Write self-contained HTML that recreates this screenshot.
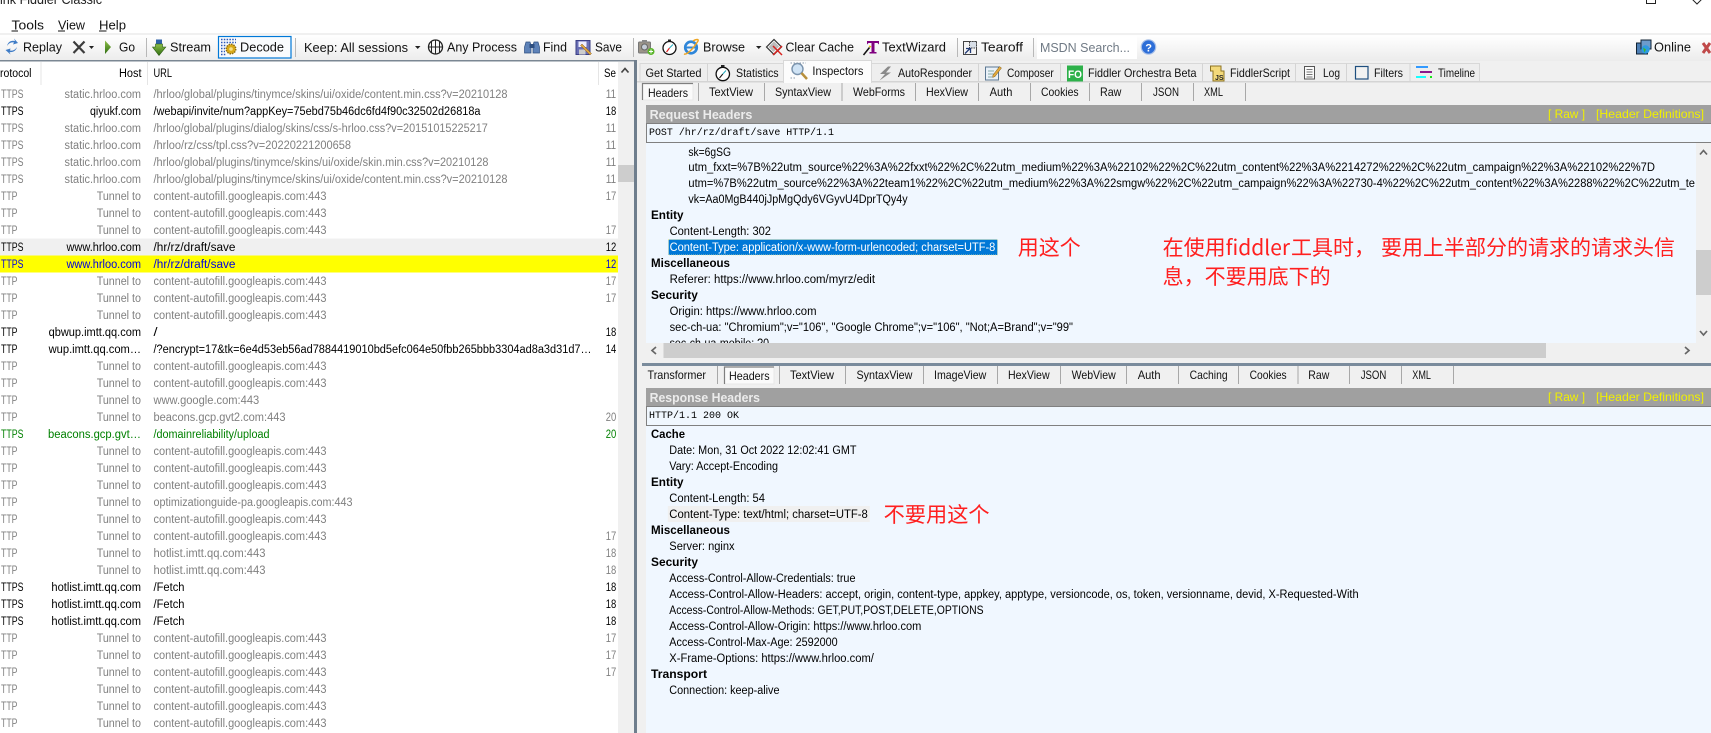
<!DOCTYPE html>
<html><head><meta charset="utf-8"><title>Fiddler Classic</title>
<style>
html,body{margin:0;padding:0;background:#fff;width:1711px;height:733px;overflow:hidden}
svg{display:block}
text{font-family:"Liberation Sans","Noto Sans CJK SC",sans-serif;font-size:11.5px;fill:#000;lengthAdjust:spacingAndGlyphs}
.g text,text.g{fill:#808080}
.k text{fill:#000}
.u{font-size:12.5px;fill:#111}
.tab{font-size:12px;fill:#111}
.h{font-weight:700;font-size:11.5px}
.bar{font-weight:700;font-size:13px;fill:#ececec}
.y{font-size:12px;fill:#f0f000}
.m{font-family:"Liberation Mono",monospace;font-size:10px}
.r{font-family:"Noto Sans CJK SC","Liberation Sans",sans-serif;font-size:21px;fill:#ff1f1f}
</style></head><body>
<svg xmlns="http://www.w3.org/2000/svg" width="1711" height="733" viewBox="0 0 1711 733">
<defs>
<linearGradient id="tb" x1="0" y1="0" x2="0" y2="1"><stop offset="0" stop-color="#fff"/><stop offset="1" stop-color="#ececec"/></linearGradient>
<linearGradient id="go" x1="0" y1="0" x2="0" y2="1"><stop offset="0" stop-color="#8fc04a"/><stop offset="1" stop-color="#2f6d12"/></linearGradient>
</defs>
<rect width="1711" height="733" fill="#fff"/>
<!-- title -->
<text x="0" y="4" textLength="102" lengthAdjust="spacingAndGlyphs" style="font-size:14px;fill:#222">ink Fiddler Classic</text>
<path d="M1646.5 -2V3.5H1655.5V-2" fill="none" stroke="#222"/>
<path d="M1692 -1L1697 4L1702 -1" fill="none" stroke="#222"/>
<!-- menu -->
<text class="u" x="11.5" y="29.5" textLength="32.5" lengthAdjust="spacingAndGlyphs">Tools</text>
<text class="u" x="58" y="29.5" textLength="27" lengthAdjust="spacingAndGlyphs">View</text>
<text class="u" x="99" y="29.5" textLength="27" lengthAdjust="spacingAndGlyphs">Help</text>
<path d="M11.5 31H18M58 31H65M99 31H106.500" stroke="#111"/>
<!-- toolbar -->
<rect x="0" y="33" width="1711" height="2" fill="#f0f0f0"/>
<rect x="0" y="35" width="1711" height="26" fill="url(#tb)"/>
<path d="M7 46C8 42 11 40 15 41L14 38.500L18 43L13 44.500L14 42.500C11 42 9 43 7 46Z" fill="#3f7cc6"/>
<path d="M17 47C16 51 13 52.500 9.500 52L10.500 54.500L5.500 50L10.500 48.500L10 50.500C13 51 15 50 17 47Z" fill="#3f7cc6"/>
<text class="u" x="23" y="51.500" textLength="39" lengthAdjust="spacingAndGlyphs">Replay</text>
<path d="M73.500 41.500L84.500 53M84.500 41.500L73.500 53" stroke="#3c3c3c" stroke-width="2.200" fill="none"/>
<path d="M89 46H94L91.500 49Z" fill="#222"/>
<path d="M105 40.500L111 47L105 54Z" fill="url(#go)"/>
<text class="u" x="119" y="51.500" textLength="16" lengthAdjust="spacingAndGlyphs">Go</text>
<rect x="146" y="38" width="1" height="19" fill="#b8b8b8"/>
<rect x="156" y="39.500" width="6" height="5" fill="#2f62a8"/>
<path d="M155.500 44H162.500V47H165.800L159 55.500L152.500 47H155.500Z" fill="url(#go)" stroke="#27590f" stroke-width=".6"/>
<text class="u" x="170" y="51.500" textLength="41" lengthAdjust="spacingAndGlyphs">Stream</text>
<rect x="218.500" y="36.500" width="72.500" height="21.500" fill="#f9fbfd" stroke="#0078d7" stroke-width="1.200"/>
<path d="M221 39.500H236M221 42.500H236M221 45.500H226M221 48.500H225M221 51.500H225M221 54.500H226" stroke="#2a58b8" stroke-width="1.500" stroke-dasharray="1.500 1.300" fill="none"/>
<circle cx="231" cy="49" r="4.800" fill="#d8a918" stroke="#8d6d10" stroke-width="1.400" stroke-dasharray="1.500 1"/>
<circle cx="231" cy="49" r="1.800" fill="#f5e08a"/>
<text class="u" x="240" y="51.500" textLength="44" lengthAdjust="spacingAndGlyphs">Decode</text>
<rect x="295" y="38" width="1" height="19" fill="#b8b8b8"/>
<text class="u" x="304" y="52" textLength="104" lengthAdjust="spacingAndGlyphs">Keep: All sessions</text>
<path d="M415 46H420.500L417.700 49Z" fill="#222"/>
<circle cx="435.500" cy="47" r="7" fill="none" stroke="#222" stroke-width="1.300"/>
<path d="M428 47H443M435.500 39.500V54.500M431.500 41.500V52.500M439.500 41.500V52.500" stroke="#222" stroke-width="1" fill="none"/>
<text class="u" x="447" y="51.500" textLength="70" lengthAdjust="spacingAndGlyphs">Any Process</text>
<path d="M526 42h4l1 3v8h-6.500v-6zM534 42h4l1.500 5v6H533v-8z" fill="#5d82b8" stroke="#2e4f80" stroke-width=".7"/>
<rect x="529.500" y="44" width="5" height="4" fill="#2e4f80"/>
<text class="u" x="543" y="51.500" textLength="24" lengthAdjust="spacingAndGlyphs">Find</text>
<rect x="576" y="40.500" width="14" height="14" fill="#6a6fb5" stroke="#3b3f85"/>
<rect x="578.500" y="41.500" width="8" height="5.500" fill="#eef"/>
<rect x="579" y="49.500" width="6.500" height="5" fill="#ccc"/>
<path d="M582 44L591.500 53.500L590 55L580.500 45.500Z" fill="#d9a441" stroke="#8a5a20" stroke-width=".5"/>
<text class="u" x="595" y="51.500" textLength="27" lengthAdjust="spacingAndGlyphs">Save</text>
<rect x="633" y="38" width="1" height="19" fill="#b8b8b8"/>
<rect x="638.500" y="42" width="12" height="11" rx="1" fill="#9b9488" stroke="#777"/>
<rect x="642" y="40" width="5" height="2.500" fill="#888"/>
<circle cx="644.500" cy="47" r="3" fill="#c5ccd6" stroke="#666"/>
<circle cx="651" cy="51.500" r="3.500" fill="#5ab52a"/>
<path d="M649 51.500H653M651 49.500V53.500" stroke="#fff"/>
<circle cx="669.500" cy="48" r="6.500" fill="#fff" stroke="#111" stroke-width="1.300"/>
<rect x="668" y="39.500" width="3" height="2" fill="#222"/>
<path d="M669.500 48L666.500 52" stroke="#d22" stroke-width="1.200"/>
<path d="M669.500 48L673 44.500" stroke="#2ab" stroke-width="1"/>
<circle cx="691" cy="47.500" r="5.800" fill="none" stroke="#2e86d9" stroke-width="2.600"/>
<path d="M686 47.500H696" stroke="#2e86d9" stroke-width="2"/>
<path d="M684 54C687 55 693 49 698 41C699 39 696 39 693 41" fill="none" stroke="#eda523" stroke-width="1.500"/>
<text class="u" x="703" y="51.500" textLength="42" lengthAdjust="spacingAndGlyphs">Browse</text>
<path d="M756 46H761.500L758.700 49Z" fill="#222"/>
<path d="M766.500 47L774 39.500L781.500 47L774 54.500Z" fill="#f4f4f4" stroke="#333" stroke-width="1.200"/>
<path d="M768.500 47L774 41.500L779 46.500L773.500 52Z" fill="#bbb"/>
<path d="M773 46L782 55M782 46L773 55" stroke="#d8231f" stroke-width="1.500"/>
<text class="u" x="785.500" y="51.500" textLength="68.500" lengthAdjust="spacingAndGlyphs">Clear Cache</text>
<path d="M867 41H879V44.500L877.500 43H874.500V52H876.500V53.500H869.500V52H871.500V43H868.500L867 44.500Z" fill="#800080"/>
<path d="M863.500 55L869.500 47.500" stroke="#111" stroke-width="1.500"/>
<path d="M869 46L871 47" stroke="#e8c410" stroke-width="1.500"/>
<text class="u" x="882" y="51.500" textLength="64" lengthAdjust="spacingAndGlyphs">TextWizard</text>
<rect x="957" y="38" width="1" height="19" fill="#b8b8b8"/>
<rect x="963.500" y="41.500" width="13" height="13" fill="#f4f4f4" stroke="#444"/>
<rect x="969.500" y="41.500" width="7" height="6.500" fill="#d8dfe8" stroke="#444" stroke-dasharray="1.500 1"/>
<path d="M965 53.500L970 48.500M966 48.500H970.500V53" stroke="#213a75" stroke-width="1.300" fill="none"/>
<text class="u" x="981" y="51.500" textLength="42" lengthAdjust="spacingAndGlyphs">Tearoff</text>
<rect x="1033" y="38" width="1" height="19" fill="#b8b8b8"/>
<rect x="1037" y="36" width="100" height="23" fill="#fff"/>
<text class="u" x="1040" y="52" textLength="90" lengthAdjust="spacingAndGlyphs" style="fill:#707a85">MSDN Search...</text>
<circle cx="1148.500" cy="47" r="7.200" fill="#2d6ed8" stroke="#a8c0e8" stroke-width="1.200"/>
<text x="1145.200" y="51.500" style="font-size:11px;font-weight:700;fill:#fff">?</text>
<rect x="1636.500" y="43" width="11" height="11" fill="#4d7fb5" stroke="#123"/>
<rect x="1641" y="40" width="10" height="9" fill="#6c9ccc" stroke="#123"/>
<circle cx="1645.500" cy="49.500" r="4.200" fill="#2d9be0"/>
<path d="M1643 47.500L1646 49.500L1644.500 52.500Z" fill="#3db82b"/>
<text class="u" x="1654" y="51.500" textLength="37" lengthAdjust="spacingAndGlyphs">Online</text>
<path d="M1703 43L1710 53M1710 43L1703 53" stroke="#c04a4a" stroke-width="3"/>

<!-- left panel -->
<rect x="0" y="60" width="634" height="1.500" fill="#7b8793"/>
<rect x="634" y="60" width="3" height="673" fill="#6f7e8d"/>
<rect x="618" y="62" width="16" height="671" fill="#f0f0f0"/>
<rect x="618" y="165" width="16" height="17" fill="#cdcdcd"/>
<path d="M621.500 72.500L625 68.500L628.500 72.500" fill="none" stroke="#444" stroke-width="1.700"/>
<path d="M41 62V85M147.500 62V85M598.500 62V85" stroke="#e5e5e5"/>
<text x="0" y="77" textLength="31.500" lengthAdjust="spacingAndGlyphs">rotocol</text>
<text x="119" y="77" textLength="22.500" lengthAdjust="spacingAndGlyphs">Host</text>
<text x="153.500" y="77" textLength="18.500" lengthAdjust="spacingAndGlyphs">URL</text>
<text x="604" y="77" textLength="12" lengthAdjust="spacingAndGlyphs">Se</text>
<rect x="0" y="238.500" width="618" height="17" fill="#f0f0f0"/>
<rect x="0" y="255.500" width="618" height="17" fill="#ffff00"/>

<g class="g">
<text x="1" y="98" textLength="22.500" lengthAdjust="spacingAndGlyphs">TTPS</text><text x="64.500" y="98" textLength="76.500" lengthAdjust="spacingAndGlyphs">static.hrloo.com</text><text x="153.500" y="98" textLength="354" lengthAdjust="spacingAndGlyphs">/hrloo/global/plugins/tinymce/skins/ui/oxide/content.min.css?v=20210128</text><text x="605.700" y="98" textLength="10.500" lengthAdjust="spacingAndGlyphs">11</text>
</g>
<g class="k">
<text x="1" y="115" textLength="22.500" lengthAdjust="spacingAndGlyphs">TTPS</text><text x="90" y="115" textLength="51" lengthAdjust="spacingAndGlyphs">qiyukf.com</text><text x="153.500" y="115" textLength="327" lengthAdjust="spacingAndGlyphs">/webapi/invite/num?appKey=75ebd75b46dc6fd4f90c32502d26818a</text><text x="605.700" y="115" textLength="10.500" lengthAdjust="spacingAndGlyphs">18</text>
</g>
<g class="g">
<text x="1" y="132" textLength="22.500" lengthAdjust="spacingAndGlyphs">TTPS</text><text x="64.500" y="132" textLength="76.500" lengthAdjust="spacingAndGlyphs">static.hrloo.com</text><text x="153.500" y="132" textLength="334.300" lengthAdjust="spacingAndGlyphs">/hrloo/global/plugins/dialog/skins/css/s-hrloo.css?v=20151015225217</text><text x="605.700" y="132" textLength="10.500" lengthAdjust="spacingAndGlyphs">11</text>
<text x="1" y="149" textLength="22.500" lengthAdjust="spacingAndGlyphs">TTPS</text><text x="64.500" y="149" textLength="76.500" lengthAdjust="spacingAndGlyphs">static.hrloo.com</text><text x="153.500" y="149" textLength="197.500" lengthAdjust="spacingAndGlyphs">/hrloo/rz/css/tpl.css?v=20220221200658</text><text x="605.700" y="149" textLength="10.500" lengthAdjust="spacingAndGlyphs">11</text>
<text x="1" y="166" textLength="22.500" lengthAdjust="spacingAndGlyphs">TTPS</text><text x="64.500" y="166" textLength="76.500" lengthAdjust="spacingAndGlyphs">static.hrloo.com</text><text x="153.500" y="166" textLength="335" lengthAdjust="spacingAndGlyphs">/hrloo/global/plugins/tinymce/skins/ui/oxide/skin.min.css?v=20210128</text><text x="605.700" y="166" textLength="10.500" lengthAdjust="spacingAndGlyphs">11</text>
<text x="1" y="183" textLength="22.500" lengthAdjust="spacingAndGlyphs">TTPS</text><text x="64.500" y="183" textLength="76.500" lengthAdjust="spacingAndGlyphs">static.hrloo.com</text><text x="153.500" y="183" textLength="354" lengthAdjust="spacingAndGlyphs">/hrloo/global/plugins/tinymce/skins/ui/oxide/content.min.css?v=20210128</text><text x="605.700" y="183" textLength="10.500" lengthAdjust="spacingAndGlyphs">11</text>
<text x="1" y="200" textLength="16.500" lengthAdjust="spacingAndGlyphs">TTP</text><text x="96.700" y="200" textLength="44.300" lengthAdjust="spacingAndGlyphs">Tunnel to</text><text x="153.500" y="200" textLength="173" lengthAdjust="spacingAndGlyphs">content-autofill.googleapis.com:443</text><text x="605.700" y="200" textLength="10.500" lengthAdjust="spacingAndGlyphs">17</text>
<text x="1" y="217" textLength="16.500" lengthAdjust="spacingAndGlyphs">TTP</text><text x="96.700" y="217" textLength="44.300" lengthAdjust="spacingAndGlyphs">Tunnel to</text><text x="153.500" y="217" textLength="173" lengthAdjust="spacingAndGlyphs">content-autofill.googleapis.com:443</text>
<text x="1" y="234" textLength="16.500" lengthAdjust="spacingAndGlyphs">TTP</text><text x="96.700" y="234" textLength="44.300" lengthAdjust="spacingAndGlyphs">Tunnel to</text><text x="153.500" y="234" textLength="173" lengthAdjust="spacingAndGlyphs">content-autofill.googleapis.com:443</text><text x="605.700" y="234" textLength="10.500" lengthAdjust="spacingAndGlyphs">17</text>
</g>
<g class="k">
<text x="1" y="251" textLength="22.500" lengthAdjust="spacingAndGlyphs">TTPS</text><text x="66.500" y="251" textLength="74.500" lengthAdjust="spacingAndGlyphs">www.hrloo.com</text><text x="153.500" y="251" textLength="82" lengthAdjust="spacingAndGlyphs">/hr/rz/draft/save</text><text x="605.700" y="251" textLength="10.500" lengthAdjust="spacingAndGlyphs">12</text>
</g>
<g style="fill:#0000e0">
<text style="fill:#0000e0" x="1" y="268" textLength="22.500" lengthAdjust="spacingAndGlyphs">TTPS</text><text style="fill:#0000e0" x="66.500" y="268" textLength="74.500" lengthAdjust="spacingAndGlyphs">www.hrloo.com</text><text style="fill:#0000e0" x="153.500" y="268" textLength="82" lengthAdjust="spacingAndGlyphs">/hr/rz/draft/save</text><text style="fill:#0000e0" x="605.700" y="268" textLength="10.500" lengthAdjust="spacingAndGlyphs">12</text>
</g>
<g class="g">
<text x="1" y="285" textLength="16.500" lengthAdjust="spacingAndGlyphs">TTP</text><text x="96.700" y="285" textLength="44.300" lengthAdjust="spacingAndGlyphs">Tunnel to</text><text x="153.500" y="285" textLength="173" lengthAdjust="spacingAndGlyphs">content-autofill.googleapis.com:443</text><text x="605.700" y="285" textLength="10.500" lengthAdjust="spacingAndGlyphs">17</text>
<text x="1" y="302" textLength="16.500" lengthAdjust="spacingAndGlyphs">TTP</text><text x="96.700" y="302" textLength="44.300" lengthAdjust="spacingAndGlyphs">Tunnel to</text><text x="153.500" y="302" textLength="173" lengthAdjust="spacingAndGlyphs">content-autofill.googleapis.com:443</text><text x="605.700" y="302" textLength="10.500" lengthAdjust="spacingAndGlyphs">17</text>
<text x="1" y="319" textLength="16.500" lengthAdjust="spacingAndGlyphs">TTP</text><text x="96.700" y="319" textLength="44.300" lengthAdjust="spacingAndGlyphs">Tunnel to</text><text x="153.500" y="319" textLength="173" lengthAdjust="spacingAndGlyphs">content-autofill.googleapis.com:443</text>
</g>
<g class="k">
<text x="1" y="336" textLength="16.500" lengthAdjust="spacingAndGlyphs">TTP</text><text x="48.600" y="336" textLength="92.400" lengthAdjust="spacingAndGlyphs">qbwup.imtt.qq.com</text><text x="153.500" y="336" textLength="4" lengthAdjust="spacingAndGlyphs">/</text><text x="605.700" y="336" textLength="10.500" lengthAdjust="spacingAndGlyphs">18</text>
<text x="1" y="353" textLength="16.500" lengthAdjust="spacingAndGlyphs">TTP</text><text x="48.600" y="353" textLength="92.400" lengthAdjust="spacingAndGlyphs">wup.imtt.qq.com…</text><text x="153.500" y="353" textLength="438" lengthAdjust="spacingAndGlyphs">/?encrypt=17&amp;tk=6e4d53eb56ad7884419010bd5efc064e50fbb265bbb3304ad8a3d31d7…</text><text x="605.700" y="353" textLength="10.500" lengthAdjust="spacingAndGlyphs">14</text>
</g>
<g class="g">
<text x="1" y="370" textLength="16.500" lengthAdjust="spacingAndGlyphs">TTP</text><text x="96.700" y="370" textLength="44.300" lengthAdjust="spacingAndGlyphs">Tunnel to</text><text x="153.500" y="370" textLength="173" lengthAdjust="spacingAndGlyphs">content-autofill.googleapis.com:443</text>
<text x="1" y="387" textLength="16.500" lengthAdjust="spacingAndGlyphs">TTP</text><text x="96.700" y="387" textLength="44.300" lengthAdjust="spacingAndGlyphs">Tunnel to</text><text x="153.500" y="387" textLength="173" lengthAdjust="spacingAndGlyphs">content-autofill.googleapis.com:443</text>
<text x="1" y="404" textLength="16.500" lengthAdjust="spacingAndGlyphs">TTP</text><text x="96.700" y="404" textLength="44.300" lengthAdjust="spacingAndGlyphs">Tunnel to</text><text x="153.500" y="404" textLength="105.700" lengthAdjust="spacingAndGlyphs">www.google.com:443</text>
<text x="1" y="421" textLength="16.500" lengthAdjust="spacingAndGlyphs">TTP</text><text x="96.700" y="421" textLength="44.300" lengthAdjust="spacingAndGlyphs">Tunnel to</text><text x="153.500" y="421" textLength="132" lengthAdjust="spacingAndGlyphs">beacons.gcp.gvt2.com:443</text><text x="605.700" y="421" textLength="10.500" lengthAdjust="spacingAndGlyphs">20</text>
</g>
<text style="fill:#008000" x="1" y="438" textLength="22.500" lengthAdjust="spacingAndGlyphs">TTPS</text><text style="fill:#008000" x="48" y="438" textLength="93" lengthAdjust="spacingAndGlyphs">beacons.gcp.gvt…</text><text style="fill:#008000" x="153.500" y="438" textLength="116" lengthAdjust="spacingAndGlyphs">/domainreliability/upload</text><text style="fill:#008000" x="605.700" y="438" textLength="10.500" lengthAdjust="spacingAndGlyphs">20</text>
<g class="g">
<text x="1" y="455" textLength="16.500" lengthAdjust="spacingAndGlyphs">TTP</text><text x="96.700" y="455" textLength="44.300" lengthAdjust="spacingAndGlyphs">Tunnel to</text><text x="153.500" y="455" textLength="173" lengthAdjust="spacingAndGlyphs">content-autofill.googleapis.com:443</text>
<text x="1" y="472" textLength="16.500" lengthAdjust="spacingAndGlyphs">TTP</text><text x="96.700" y="472" textLength="44.300" lengthAdjust="spacingAndGlyphs">Tunnel to</text><text x="153.500" y="472" textLength="173" lengthAdjust="spacingAndGlyphs">content-autofill.googleapis.com:443</text>
<text x="1" y="489" textLength="16.500" lengthAdjust="spacingAndGlyphs">TTP</text><text x="96.700" y="489" textLength="44.300" lengthAdjust="spacingAndGlyphs">Tunnel to</text><text x="153.500" y="489" textLength="173" lengthAdjust="spacingAndGlyphs">content-autofill.googleapis.com:443</text>
<text x="1" y="506" textLength="16.500" lengthAdjust="spacingAndGlyphs">TTP</text><text x="96.700" y="506" textLength="44.300" lengthAdjust="spacingAndGlyphs">Tunnel to</text><text x="153.500" y="506" textLength="199" lengthAdjust="spacingAndGlyphs">optimizationguide-pa.googleapis.com:443</text>
<text x="1" y="523" textLength="16.500" lengthAdjust="spacingAndGlyphs">TTP</text><text x="96.700" y="523" textLength="44.300" lengthAdjust="spacingAndGlyphs">Tunnel to</text><text x="153.500" y="523" textLength="173" lengthAdjust="spacingAndGlyphs">content-autofill.googleapis.com:443</text>
<text x="1" y="540" textLength="16.500" lengthAdjust="spacingAndGlyphs">TTP</text><text x="96.700" y="540" textLength="44.300" lengthAdjust="spacingAndGlyphs">Tunnel to</text><text x="153.500" y="540" textLength="173" lengthAdjust="spacingAndGlyphs">content-autofill.googleapis.com:443</text><text x="605.700" y="540" textLength="10.500" lengthAdjust="spacingAndGlyphs">17</text>
<text x="1" y="557" textLength="16.500" lengthAdjust="spacingAndGlyphs">TTP</text><text x="96.700" y="557" textLength="44.300" lengthAdjust="spacingAndGlyphs">Tunnel to</text><text x="153.500" y="557" textLength="112" lengthAdjust="spacingAndGlyphs">hotlist.imtt.qq.com:443</text><text x="605.700" y="557" textLength="10.500" lengthAdjust="spacingAndGlyphs">18</text>
<text x="1" y="574" textLength="16.500" lengthAdjust="spacingAndGlyphs">TTP</text><text x="96.700" y="574" textLength="44.300" lengthAdjust="spacingAndGlyphs">Tunnel to</text><text x="153.500" y="574" textLength="112" lengthAdjust="spacingAndGlyphs">hotlist.imtt.qq.com:443</text><text x="605.700" y="574" textLength="10.500" lengthAdjust="spacingAndGlyphs">18</text>
</g>
<g class="k">
<text x="1" y="591" textLength="22.500" lengthAdjust="spacingAndGlyphs">TTPS</text><text x="51.400" y="591" textLength="89.600" lengthAdjust="spacingAndGlyphs">hotlist.imtt.qq.com</text><text x="153.500" y="591" textLength="31" lengthAdjust="spacingAndGlyphs">/Fetch</text><text x="605.700" y="591" textLength="10.500" lengthAdjust="spacingAndGlyphs">18</text>
<text x="1" y="608" textLength="22.500" lengthAdjust="spacingAndGlyphs">TTPS</text><text x="51.400" y="608" textLength="89.600" lengthAdjust="spacingAndGlyphs">hotlist.imtt.qq.com</text><text x="153.500" y="608" textLength="31" lengthAdjust="spacingAndGlyphs">/Fetch</text><text x="605.700" y="608" textLength="10.500" lengthAdjust="spacingAndGlyphs">18</text>
<text x="1" y="625" textLength="22.500" lengthAdjust="spacingAndGlyphs">TTPS</text><text x="51.400" y="625" textLength="89.600" lengthAdjust="spacingAndGlyphs">hotlist.imtt.qq.com</text><text x="153.500" y="625" textLength="31" lengthAdjust="spacingAndGlyphs">/Fetch</text><text x="605.700" y="625" textLength="10.500" lengthAdjust="spacingAndGlyphs">18</text>
</g>
<g class="g">
<text x="1" y="642" textLength="16.500" lengthAdjust="spacingAndGlyphs">TTP</text><text x="96.700" y="642" textLength="44.300" lengthAdjust="spacingAndGlyphs">Tunnel to</text><text x="153.500" y="642" textLength="173" lengthAdjust="spacingAndGlyphs">content-autofill.googleapis.com:443</text><text x="605.700" y="642" textLength="10.500" lengthAdjust="spacingAndGlyphs">17</text>
<text x="1" y="659" textLength="16.500" lengthAdjust="spacingAndGlyphs">TTP</text><text x="96.700" y="659" textLength="44.300" lengthAdjust="spacingAndGlyphs">Tunnel to</text><text x="153.500" y="659" textLength="173" lengthAdjust="spacingAndGlyphs">content-autofill.googleapis.com:443</text><text x="605.700" y="659" textLength="10.500" lengthAdjust="spacingAndGlyphs">17</text>
<text x="1" y="676" textLength="16.500" lengthAdjust="spacingAndGlyphs">TTP</text><text x="96.700" y="676" textLength="44.300" lengthAdjust="spacingAndGlyphs">Tunnel to</text><text x="153.500" y="676" textLength="173" lengthAdjust="spacingAndGlyphs">content-autofill.googleapis.com:443</text><text x="605.700" y="676" textLength="10.500" lengthAdjust="spacingAndGlyphs">17</text>
<text x="1" y="693" textLength="16.500" lengthAdjust="spacingAndGlyphs">TTP</text><text x="96.700" y="693" textLength="44.300" lengthAdjust="spacingAndGlyphs">Tunnel to</text><text x="153.500" y="693" textLength="173" lengthAdjust="spacingAndGlyphs">content-autofill.googleapis.com:443</text>
<text x="1" y="710" textLength="16.500" lengthAdjust="spacingAndGlyphs">TTP</text><text x="96.700" y="710" textLength="44.300" lengthAdjust="spacingAndGlyphs">Tunnel to</text><text x="153.500" y="710" textLength="173" lengthAdjust="spacingAndGlyphs">content-autofill.googleapis.com:443</text>
<text x="1" y="727" textLength="16.500" lengthAdjust="spacingAndGlyphs">TTP</text><text x="96.700" y="727" textLength="44.300" lengthAdjust="spacingAndGlyphs">Tunnel to</text><text x="153.500" y="727" textLength="173" lengthAdjust="spacingAndGlyphs">content-autofill.googleapis.com:443</text>
</g>

<!-- right pane base -->
<rect x="637" y="61" width="1074" height="672" fill="#f0f0f0"/>
<!-- main tabs -->
<path d="M640 81.500V63.500H1479.500V81.500" fill="#eeeeee" stroke="#d8d8d8"/>
<rect x="637" y="81" width="1074" height="1.500" fill="#d4d4d4"/>
<path d="M707.500 63.500V81M871.500 63.500V81M978.500 63.500V81M1060.500 63.500V81M1202.500 63.500V81M1295.500 63.500V81M1346.500 63.500V81M1410 63.500V81" stroke="#d4d4d4" fill="none"/>
<rect x="783.500" y="60.500" width="88" height="22" fill="#fcfcfc" stroke="#d8d8d8"/>
<rect x="784" y="80" width="87" height="3" fill="#fcfcfc"/>
<text class="tab" x="645.500" y="77" textLength="56" lengthAdjust="spacingAndGlyphs">Get Started</text>
<circle cx="722.800" cy="74" r="6.700" fill="#fff" stroke="#111" stroke-width="1.300"/>
<rect x="721" y="65" width="3.500" height="2" fill="#222"/>
<path d="M722.800 74L719.500 78" stroke="#111"/><path d="M722.800 74L726 70.500" stroke="#2ab"/>
<text class="tab" x="736" y="77" textLength="42.600" lengthAdjust="spacingAndGlyphs">Statistics</text>
<circle cx="797.500" cy="69" r="5.500" fill="#cfe3f5" stroke="#7a93ad" stroke-width="1.400"/>
<path d="M801.500 73L807 79" stroke="#b8903c" stroke-width="2.500"/>
<path d="M790.500 63H806M790.500 78H796" stroke="#8a9aab" stroke-dasharray="1.500 1.500" fill="none"/>
<text class="tab" x="812.400" y="75" textLength="51" lengthAdjust="spacingAndGlyphs">Inspectors</text>
<path d="M888 66.500L880 74H885L879.500 80.500L891 72.500H886L891 66.500Z" fill="#8a8a8a"/>
<text class="tab" x="898" y="77" textLength="74" lengthAdjust="spacingAndGlyphs">AutoResponder</text>
<rect x="985.500" y="67" width="13" height="13" fill="#e9f1f8" stroke="#5c7893"/>
<path d="M988 71H994M988 74H994M988 77H992" stroke="#8aa" fill="none"/>
<path d="M993 75L999.500 66.500L1001.500 68L995 76.500L992.500 77.500Z" fill="#e2a93b" stroke="#7a5a20" stroke-width=".5"/>
<text class="tab" x="1007" y="77" textLength="46.700" lengthAdjust="spacingAndGlyphs">Composer</text>
<rect x="1067" y="65.500" width="16" height="16" fill="#2db14a"/>
<text x="1068" y="78" textLength="14" lengthAdjust="spacingAndGlyphs" style="font-size:11px;font-weight:700;fill:#fff">FO</text>
<text class="tab" x="1088" y="77" textLength="108.500" lengthAdjust="spacingAndGlyphs">Fiddler Orchestra Beta</text>
<path d="M1210.500 66H1221V71H1224V81H1213V71H1210.500Z" fill="#f3d97a" stroke="#8d7424"/>
<text x="1215" y="80" style="font-size:7px;font-weight:700;fill:#222">JS</text>
<text class="tab" x="1230" y="77" textLength="60" lengthAdjust="spacingAndGlyphs">FiddlerScript</text>
<rect x="1304.500" y="66.500" width="10" height="12.500" fill="#fbfbfb" stroke="#555"/>
<path d="M1306.500 69.500H1312.500M1306.500 72H1312.500M1306.500 74.500H1312.500M1306.500 77H1312.500" stroke="#777" fill="none"/>
<text class="tab" x="1323" y="77" textLength="17" lengthAdjust="spacingAndGlyphs">Log</text>
<rect x="1355.500" y="66.500" width="12.500" height="12.500" fill="#f2f2f2" stroke="#1f4f7f" stroke-width="1.200"/>
<text class="tab" x="1374" y="77" textLength="29" lengthAdjust="spacingAndGlyphs">Filters</text>
<path d="M1416 67H1428" stroke="#1e90ff" stroke-width="1.800"/>
<path d="M1420 72H1432" stroke="#800080" stroke-width="1.800"/>
<path d="M1416 77H1426" stroke="#00ffff" stroke-width="1.800"/>
<path d="M1430 77H1432" stroke="#00e000" stroke-width="1.800"/>
<text class="tab" x="1438" y="77" textLength="37" lengthAdjust="spacingAndGlyphs">Timeline</text>

<!-- request sub tabs -->
<rect x="642.500" y="83.500" width="50.500" height="16.500" fill="#fafafa" stroke="#e8e8e8"/>
<path d="M642.500 100V83.500H693" stroke="#7f7f7f" fill="none" stroke-width="1.200"/>
<text class="tab" x="648" y="97" textLength="40" lengthAdjust="spacingAndGlyphs">Headers</text>
<path d="M698.500 83V101M764.500 83V101M842 83V101M915.500 83V101M978.500 83V101M1030.500 83V101M1089.500 83V101M1141.500 83V101M1193.500 83V101M1245.500 83V101" stroke="#a8a8a8" fill="none"/>
<text class="tab" x="709" y="96" textLength="44" lengthAdjust="spacingAndGlyphs">TextView</text>
<text class="tab" x="775" y="96" textLength="56" lengthAdjust="spacingAndGlyphs">SyntaxView</text>
<text class="tab" x="853" y="96" textLength="52" lengthAdjust="spacingAndGlyphs">WebForms</text>
<text class="tab" x="926" y="96" textLength="42" lengthAdjust="spacingAndGlyphs">HexView</text>
<text class="tab" x="989.600" y="96" textLength="22.800" lengthAdjust="spacingAndGlyphs">Auth</text>
<text class="tab" x="1041" y="96" textLength="37.600" lengthAdjust="spacingAndGlyphs">Cookies</text>
<text class="tab" x="1100" y="96" textLength="21.400" lengthAdjust="spacingAndGlyphs">Raw</text>
<text class="tab" x="1153" y="96" textLength="26" lengthAdjust="spacingAndGlyphs">JSON</text>
<text class="tab" x="1204" y="96" textLength="19" lengthAdjust="spacingAndGlyphs">XML</text>

<!-- request headers -->
<rect x="646" y="105" width="1065" height="18.500" fill="#a0a0a0"/>
<rect x="646" y="123" width="1065" height="1" fill="#808080"/>
<text class="bar" x="649.600" y="119" textLength="102.800" lengthAdjust="spacingAndGlyphs">Request Headers</text>
<text class="y" x="1548" y="118" textLength="37" lengthAdjust="spacingAndGlyphs">[ Raw ]</text>
<text class="y" x="1596" y="118" textLength="108" lengthAdjust="spacingAndGlyphs">[Header Definitions]</text>
<rect x="646" y="124" width="1065" height="18" fill="#f0f7fe"/>
<rect x="646" y="124" width="1" height="19" fill="#808080"/>
<rect x="646" y="142" width="1065" height="1" fill="#808080"/>
<text class="m" x="649" y="135" textLength="185" lengthAdjust="spacingAndGlyphs">POST /hr/rz/draft/save HTTP/1.1</text>
<rect x="646" y="143" width="1050" height="200" fill="#f0f7ff"/>
<text x="688.400" y="156" textLength="42.600" lengthAdjust="spacingAndGlyphs">sk=6gSG</text>
<text x="688.400" y="171" textLength="966.600" lengthAdjust="spacingAndGlyphs">utm_fxxt=%7B%22utm_source%22%3A%22fxxt%22%2C%22utm_medium%22%3A%22102%22%2C%22utm_content%22%3A%2214272%22%2C%22utm_campaign%22%3A%22102%22%7D</text>
<text x="688.400" y="187" textLength="1006.600" lengthAdjust="spacingAndGlyphs">utm=%7B%22utm_source%22%3A%22team1%22%2C%22utm_medium%22%3A%22smgw%22%2C%22utm_campaign%22%3A%22730-4%22%2C%22utm_content%22%3A%2288%22%2C%22utm_te</text>
<text x="688.400" y="203" textLength="219.200" lengthAdjust="spacingAndGlyphs">vk=Aa0MgB440jJpMgQdy6VGyvU4DprTQy4y</text>
<text class="h" x="651" y="219" textLength="32.500" lengthAdjust="spacingAndGlyphs">Entity</text>
<text x="669.600" y="235" textLength="101.400" lengthAdjust="spacingAndGlyphs">Content-Length: 302</text>
<rect x="668.500" y="239.500" width="329" height="15.500" fill="#0078d7" stroke="#e8e8a0" stroke-dasharray="1 1" stroke-width=".8"/>
<text style="fill:#fff" x="669.600" y="251" textLength="325.700" lengthAdjust="spacingAndGlyphs">Content-Type: application/x-www-form-urlencoded; charset=UTF-8</text>
<text class="h" x="651" y="267" textLength="79" lengthAdjust="spacingAndGlyphs">Miscellaneous</text>
<text x="669.600" y="283" textLength="205.400" lengthAdjust="spacingAndGlyphs">Referer: https://www.hrloo.com/myrz/edit</text>
<text class="h" x="651" y="299" textLength="46.800" lengthAdjust="spacingAndGlyphs">Security</text>
<text x="669.600" y="315" textLength="146.900" lengthAdjust="spacingAndGlyphs">Origin: https://www.hrloo.com</text>
<text x="669.600" y="331" textLength="403.400" lengthAdjust="spacingAndGlyphs">sec-ch-ua: "Chromium";v="106", "Google Chrome";v="106", "Not;A=Brand";v="99"</text>
<text x="669.600" y="347" textLength="99.400" lengthAdjust="spacingAndGlyphs">sec-ch-ua-mobile: ?0</text>
<text class="r" x="1017.800" y="255" textLength="63" lengthAdjust="spacingAndGlyphs">用这个</text>
<text class="r" x="1162.600" y="255" textLength="63" lengthAdjust="spacingAndGlyphs">在使用</text>
<text class="r" x="1225.600" y="255" textLength="64.400" lengthAdjust="spacingAndGlyphs">fiddler</text>
<text class="r" x="1291" y="255" textLength="84" lengthAdjust="spacingAndGlyphs">工具时，</text>
<text class="r" x="1381" y="255" textLength="294" lengthAdjust="spacingAndGlyphs">要用上半部分的请求的请求头信</text>
<text class="r" x="1162.600" y="284" textLength="168" lengthAdjust="spacingAndGlyphs">息，不要用底下的</text>
<!-- request scrollbars -->
<rect x="1696" y="143" width="15" height="220" fill="#f0f0f0"/>
<rect x="1696" y="250" width="15" height="45" fill="#cdcdcd"/>
<path d="M1700 154.500L1703.500 150.500L1707 154.500M1700 331L1703.500 335L1707 331" fill="none" stroke="#666" stroke-width="1.700"/>
<rect x="646" y="343" width="1050" height="20" fill="#f0f0f0"/>
<rect x="663.500" y="343" width="882.500" height="15" fill="#cdcdcd"/>
<path d="M656 347L652 350.500L656 354M1685 347L1689 350.500L1685 354" fill="none" stroke="#666" stroke-width="1.700"/>

<!-- splitter -->
<rect x="642" y="363" width="1069" height="3" fill="#7a8b9c"/>

<!-- response sub tabs -->
<text class="tab" x="647.500" y="379" textLength="58.500" lengthAdjust="spacingAndGlyphs">Transformer</text>
<rect x="724.500" y="367" width="49.500" height="17" fill="#fafafa" stroke="#e8e8e8"/>
<path d="M724.500 384V367H774" stroke="#7f7f7f" fill="none" stroke-width="1.200"/>
<text class="tab" x="729" y="380" textLength="40.600" lengthAdjust="spacingAndGlyphs">Headers</text>
<path d="M717.500 366V384M779.500 366V384M845.500 366V384M923.500 366V384M997.500 366V384M1060.500 366V384M1126.500 366V384M1178.500 366V384M1238.500 366V384M1298 366V384M1349.500 366V384M1401.500 366V384M1453.500 366V384" stroke="#a8a8a8" fill="none"/>
<text class="tab" x="790" y="379" textLength="44" lengthAdjust="spacingAndGlyphs">TextView</text>
<text class="tab" x="856.500" y="379" textLength="55.900" lengthAdjust="spacingAndGlyphs">SyntaxView</text>
<text class="tab" x="934" y="379" textLength="52.300" lengthAdjust="spacingAndGlyphs">ImageView</text>
<text class="tab" x="1008" y="379" textLength="41.600" lengthAdjust="spacingAndGlyphs">HexView</text>
<text class="tab" x="1071.600" y="379" textLength="44.100" lengthAdjust="spacingAndGlyphs">WebView</text>
<text class="tab" x="1137.700" y="379" textLength="22.900" lengthAdjust="spacingAndGlyphs">Auth</text>
<text class="tab" x="1189.600" y="379" textLength="38" lengthAdjust="spacingAndGlyphs">Caching</text>
<text class="tab" x="1249.600" y="379" textLength="37.100" lengthAdjust="spacingAndGlyphs">Cookies</text>
<text class="tab" x="1308.300" y="379" textLength="21" lengthAdjust="spacingAndGlyphs">Raw</text>
<text class="tab" x="1360.700" y="379" textLength="25.600" lengthAdjust="spacingAndGlyphs">JSON</text>
<text class="tab" x="1412.300" y="379" textLength="18.700" lengthAdjust="spacingAndGlyphs">XML</text>

<!-- response headers -->
<rect x="646" y="388" width="1065" height="18.500" fill="#a0a0a0"/>
<rect x="646" y="406" width="1065" height="1" fill="#808080"/>
<text class="bar" x="649.600" y="402" textLength="110.400" lengthAdjust="spacingAndGlyphs">Response Headers</text>
<text class="y" x="1548" y="401" textLength="37" lengthAdjust="spacingAndGlyphs">[ Raw ]</text>
<text class="y" x="1596" y="401" textLength="108" lengthAdjust="spacingAndGlyphs">[Header Definitions]</text>
<rect x="646" y="407" width="1065" height="18" fill="#f0f7fe"/>
<rect x="646" y="407" width="1" height="19" fill="#808080"/>
<rect x="646" y="425" width="1065" height="1" fill="#808080"/>
<text class="m" x="649" y="418" textLength="90" lengthAdjust="spacingAndGlyphs">HTTP/1.1 200 OK</text>
<rect x="646" y="426" width="1065" height="307" fill="#f0f7ff"/>
<text class="h" x="651" y="438" textLength="34" lengthAdjust="spacingAndGlyphs">Cache</text>
<text x="669.300" y="454" textLength="187.200" lengthAdjust="spacingAndGlyphs">Date: Mon, 31 Oct 2022 12:02:41 GMT</text>
<text x="669.300" y="470" textLength="108.700" lengthAdjust="spacingAndGlyphs">Vary: Accept-Encoding</text>
<text class="h" x="651" y="486" textLength="32.500" lengthAdjust="spacingAndGlyphs">Entity</text>
<text x="669.300" y="502" textLength="95.700" lengthAdjust="spacingAndGlyphs">Content-Length: 54</text>
<rect x="667.800" y="506" width="202" height="16" fill="#f0f0f0"/>
<text x="669.300" y="518" textLength="198.500" lengthAdjust="spacingAndGlyphs">Content-Type: text/html; charset=UTF-8</text>
<text class="r" x="883.600" y="522" textLength="106" lengthAdjust="spacingAndGlyphs">不要用这个</text>
<text class="h" x="651" y="534" textLength="79" lengthAdjust="spacingAndGlyphs">Miscellaneous</text>
<text x="669.300" y="550" textLength="65.300" lengthAdjust="spacingAndGlyphs">Server: nginx</text>
<text class="h" x="651" y="566" textLength="47" lengthAdjust="spacingAndGlyphs">Security</text>
<text x="669.300" y="582" textLength="186.200" lengthAdjust="spacingAndGlyphs">Access-Control-Allow-Credentials: true</text>
<text x="669.300" y="598" textLength="689.300" lengthAdjust="spacingAndGlyphs">Access-Control-Allow-Headers: accept, origin, content-type, appkey, apptype, versioncode, os, token, versionname, devid, X-Requested-With</text>
<text x="669.300" y="614" textLength="314.300" lengthAdjust="spacingAndGlyphs">Access-Control-Allow-Methods: GET,PUT,POST,DELETE,OPTIONS</text>
<text x="669.300" y="630" textLength="252" lengthAdjust="spacingAndGlyphs">Access-Control-Allow-Origin: https://www.hrloo.com</text>
<text x="669.300" y="646" textLength="168.400" lengthAdjust="spacingAndGlyphs">Access-Control-Max-Age: 2592000</text>
<text x="669.300" y="662" textLength="204.600" lengthAdjust="spacingAndGlyphs">X-Frame-Options: https://www.hrloo.com/</text>
<text class="h" x="651" y="678" textLength="56" lengthAdjust="spacingAndGlyphs">Transport</text>
<text x="669.300" y="694" textLength="110.200" lengthAdjust="spacingAndGlyphs">Connection: keep-alive</text>
</svg>
</body></html>
